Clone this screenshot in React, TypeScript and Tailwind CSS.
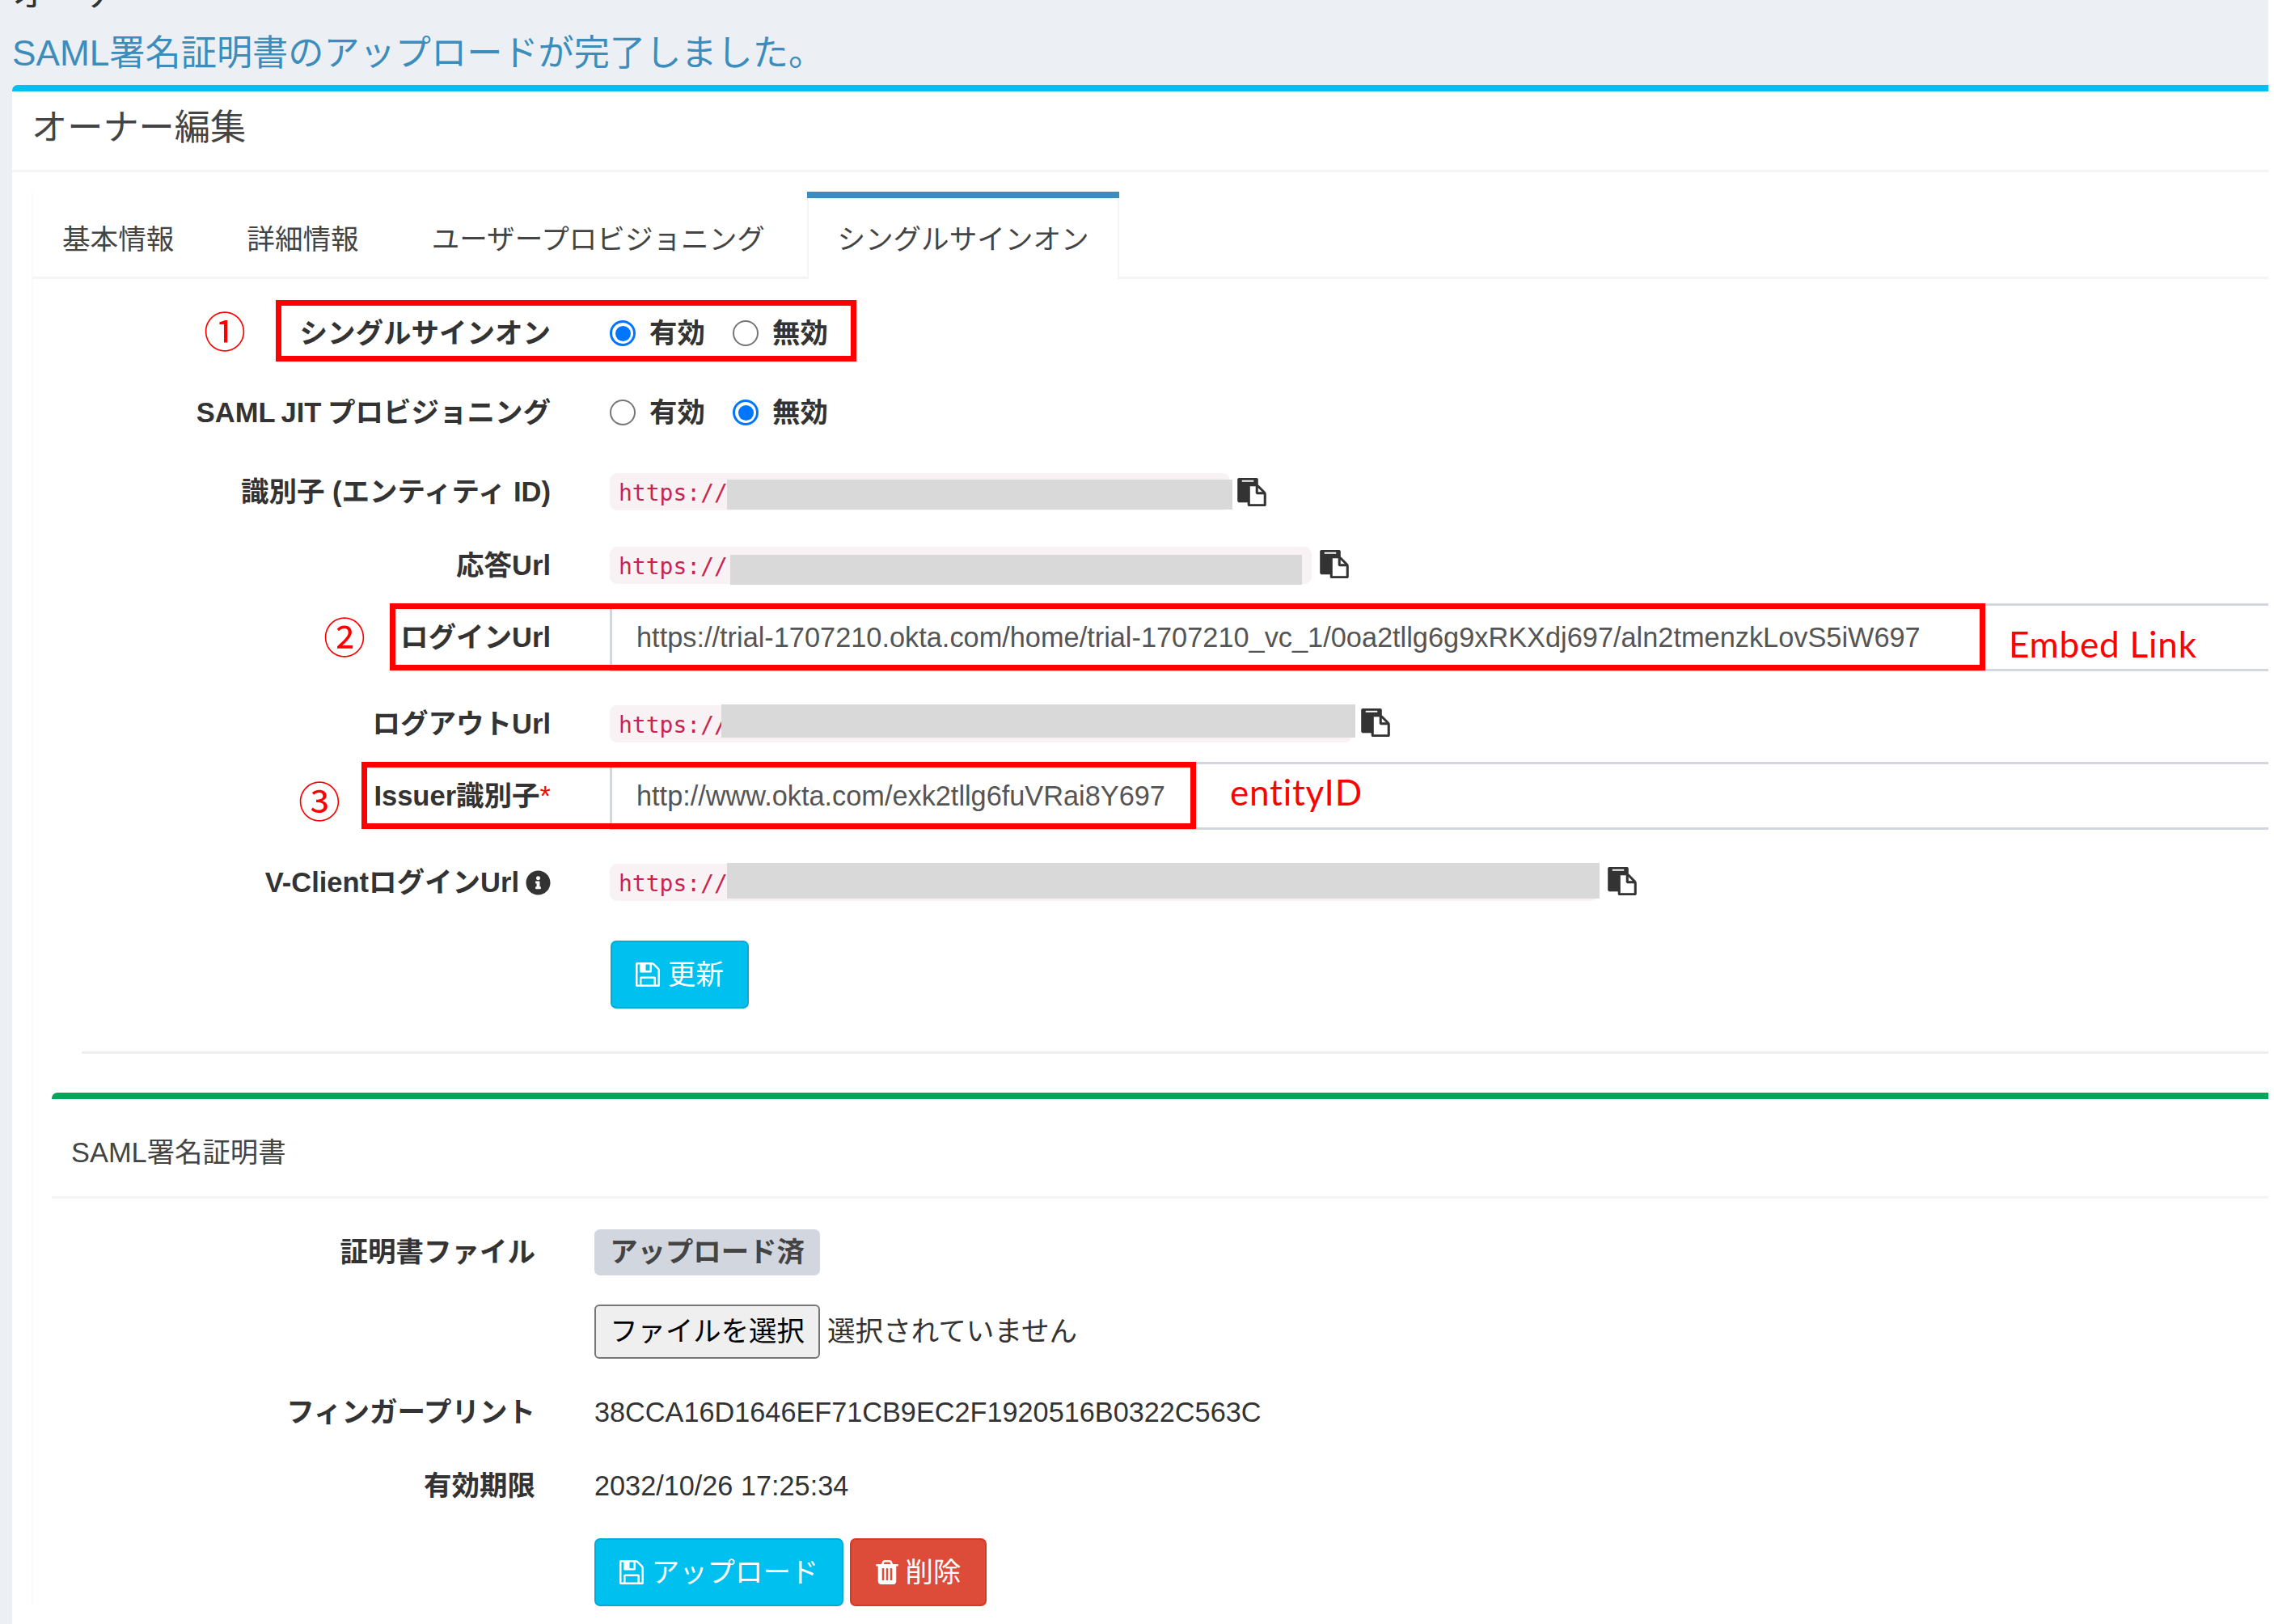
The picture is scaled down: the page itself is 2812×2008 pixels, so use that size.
import { FaInfoCircle } from "react-icons/fa";

const tabs = ["基本情報", "詳細情報", "ユーザープロビジョニング"];

function Label({ children, className = "" }: { children: React.ReactNode; className?: string }) {
  return (
    <div
      className={`flex shrink-0 items-center justify-end whitespace-pre font-bold text-[34.5px] text-[#333] ${className}`}
    >
      {children}
    </div>
  );
}

function Radio({ checked }: { checked?: boolean }) {
  return (
    <span
      className={
        checked
          ? "flex size-8 items-center justify-center rounded-full border-[3px] border-[#0075ff] bg-white"
          : "flex size-8 items-center justify-center rounded-full border-[2.5px] border-[#767676] bg-white"
      }
    >
      {checked && <span className="size-[19px] rounded-full bg-[#0075ff]"></span>}
    </span>
  );
}

function RadioRow({ label, enabled }: { label: string; enabled: boolean }) {
  return (
    <div className="flex h-[98px] items-center">
      <Label className="w-[642px] [word-spacing:-2px]">{label}</Label>
      <div className="ml-[73px] flex items-center font-bold text-[#333]">
        <Radio checked={enabled} />
        <span className="ml-[17px] w-[103px]">有効</span>
        <Radio checked={!enabled} />
        <span className="ml-[17px]">無効</span>
      </div>
    </div>
  );
}

function ClipIcon({ className = "" }: { className?: string }) {
  return (
    <svg viewBox="0 0 1792 1792" className={`h-[35px] w-[36px] shrink-0 fill-[#333] stroke-[#333] stroke-[30px] ${className}`}>
      <path d="M768 1664h896v-640h-416q-40 0-68-28t-28-68v-416h-384v1152zm256-1440v-64q0-13-9.500-22.500t-22.500-9.500h-704q-13 0-22.500 9.500t-9.500 22.500v64q0 13 9.500 22.500t22.500 9.500h704q13 0 22.500-9.500t9.500-22.500zm256 672h299l-299-299v299zm512 128v672q0 40-28 68t-68 28h-960q-40 0-68-28t-28-68v-160h-544q-40 0-68-28t-28-68v-1344q0-40 28-68t68-28h1088q40 0 68 28t28 68v328q21 13 36 28l408 408q28 28 48 76t20 88z" />
    </svg>
  );
}

function SaveIcon() {
  return (
    <svg viewBox="128 128 1536 1536" className="size-[30px] fill-white">
      <path d="M512 1536h768v-384h-768v384zm896 0h128v-896q0-14-10-38.500t-20-34.500l-281-281q-10-10-34-20t-39-10v416q0 40-28 68t-68 28h-576q-40 0-68-28t-28-68v-416h-128v1280h128v-416q0-40 28-68t68-28h832q40 0 68 28t28 68v416zm-384-928v-320q0-13-9.500-22.500t-22.500-9.500h-192q-13 0-22.500 9.500t-9.500 22.500v320q0 13 9.500 22.500t22.500 9.500h192q13 0 22.500-9.500t9.500-22.500zm640 32v928q0 40-28 68t-68 28h-1344q-40 0-68-28t-28-68v-1344q0-40 28-68t68-28h928q40 0 88 20t76 48l280 280q28 28 48 76t20 88z" />
    </svg>
  );
}

function TrashIcon() {
  return (
    <svg viewBox="192 128 1408 1536" className="h-[30px] w-[28px] fill-white">
      <path d="M704 1376v-704q0-14-9-23t-23-9h-64q-14 0-23 9t-9 23v704q0 14 9 23t23 9h64q14 0 23-9t9-23zm256 0v-704q0-14-9-23t-23-9h-64q-14 0-23 9t-9 23v704q0 14 9 23t23 9h64q14 0 23-9t9-23zm256 0v-704q0-14-9-23t-23-9h-64q-14 0-23 9t-9 23v704q0 14 9 23t23 9h64q14 0 23-9t9-23zm-544-992h448l-48-117q-7-9-17-11h-317q-10 2-17 11zm928 32v64q0 14-9 23t-23 9h-96v948q0 83-47 143.500t-113 60.500h-832q-66 0-113-58.500t-47-141.500v-952h-96q-14 0-23-9t-9-23v-64q0-14 9-23t23-9h309l70-167q15-37 54-63t79-26h320q40 0 79 26t54 63l70 167h309q14 0 23 9t9 23z" />
    </svg>
  );
}

export default function App() {
  return (
    <div className="h-[2008px] w-[2812px] overflow-hidden border-r-[7px] border-white bg-[#ecf0f5] pl-[15px] font-['Liberation_Sans','Noto_Sans_CJK_JP',sans-serif] text-[34.4px] leading-none text-[#333]">
      <div className="flex h-[105px] flex-col text-[44.2px]">
        <div className="-mt-[29px] h-[44px]">オーナー</div>
        <div className="mt-[29px] h-[44px] whitespace-nowrap text-[#3c8dbc]">
          SAML署名証明書のアップロードが完了しました。
        </div>
      </div>

      <div className="h-[1903px] rounded-tl-[7px] border-t-8 border-[#00c0ef] bg-white">
        <div className="flex h-[100px] items-center border-b-[3px] border-[#f4f4f4] pl-[24px] text-[44.2px] text-[#444]">
          <span className="mb-[6px]">オーナー編集</span>
        </div>

        <div className="ml-6 mt-[24px] border-l-2 border-[#fafafa]">
          <div className="flex h-[108px] text-[34.6px] text-[#444]">
            <div className="flex w-[957px] items-center gap-[90px] border-b-[3px] border-[#f4f4f4] pl-[36px] pt-[13px] whitespace-nowrap">
              {tabs.map((tab) => (
                <span key={tab}>{tab}</span>
              ))}
            </div>
            <div className="flex w-[386px] flex-col">
              <div className="h-2 bg-[#3c8dbc]"></div>
              <div className="flex flex-1 items-center justify-center border-x-2 border-[#f4f4f4] pt-[3px] whitespace-nowrap">
                シングルサインオン
              </div>
            </div>
            <div className="flex-1 border-b-[3px] border-[#f4f4f4]"></div>
          </div>

          {/* single sign-on form */}
          <div className="relative -ml-[2px] h-[958px] pt-[18px]">
            <RadioRow label="シングルサインオン" enabled={true} />
            <RadioRow label="SAML JIT プロビジョニング" enabled={false} />

            <div className="flex h-[98px] items-center">
              <Label className="w-[642px]">識別子 (エンティティ ID)</Label>
              <div className="relative ml-[73px] h-[46px] w-[767px] rounded-[9px] bg-[#f9f2f4] pl-[11px] pt-[11px] font-['DejaVu_Sans_Mono'] text-[28px] text-[#c7254e]">
                https://
                <div className="absolute left-[145px] top-[8px] h-[37px] w-[625px] bg-[#d9d9d9]"></div>
              </div>
              <ClipIcon className="ml-[9px]" />
            </div>

            <div className="flex h-[84px] items-center">
              <Label className="w-[642px]">応答Url</Label>
              <div className="relative ml-[73px] h-[46px] w-[868px] rounded-[9px] bg-[#f9f2f4] pl-[11px] pt-[11px] font-['DejaVu_Sans_Mono'] text-[28px] text-[#c7254e]">
                https://
                <div className="absolute left-[149px] top-[10px] h-[37px] w-[707px] bg-[#d9d9d9]"></div>
              </div>
              <ClipIcon className="mb-[3px] ml-[10px]" />
            </div>

            <div className="mt-[5px] flex h-[84px] items-center">
              <Label className="w-[642px]">ログインUrl</Label>
              <div className="ml-[73px] flex h-[84px] flex-1 items-center border-y-[3px] border-l-[3px] border-[#d2d6de] pl-[30px] text-[34.33px] text-[#555]">
                https://trial-1707210.okta.com/home/trial-1707210_vc_1/0oa2tllg6g9xRKXdj697/aln2tmenzkLovS5iW697
              </div>
            </div>

            <div className="mt-[23px] flex h-[84px] items-center">
              <Label className="w-[642px]">ログアウトUrl</Label>
              <div className="relative ml-[73px] h-[46px] w-[918px] rounded-[9px] bg-[#f9f2f4] pl-[11px] pt-[11px] font-['DejaVu_Sans_Mono'] text-[28px] text-[#c7254e]">
                https://
                <div className="absolute left-[138px] -top-px h-[41px] w-[784px] bg-[#d9d9d9]"></div>
              </div>
              <ClipIcon className="mb-[3px] ml-[11px]" />
            </div>

            <div className="mt-[5px] flex h-[84px] items-center">
              <Label className="w-[642px]">
                Issuer識別子<span className="font-normal text-[#f00]">*</span>
              </Label>
              <div className="ml-[73px] flex h-[84px] flex-1 items-center border-y-[3px] border-l-[3px] border-[#d2d6de] pl-[30px] text-[34.3px] text-[#555]">
                http://www.okta.com/exk2tllg6fuVRai8Y697
              </div>
            </div>

            <div className="mt-[23px] flex h-[84px] items-center">
              <Label className="w-[642px]">
                V-ClientログインUrl
                <FaInfoCircle className="ml-[8px] size-[31px]" />
              </Label>
              <div className="relative ml-[73px] h-[46px] w-[1222px] rounded-[9px] bg-[#f9f2f4] pl-[11px] pt-[11px] font-['DejaVu_Sans_Mono'] text-[28px] text-[#c7254e]">
                https://
                <div className="absolute left-[145px] -top-px h-[44px] w-[1079px] bg-[#d9d9d9]"></div>
              </div>
              <ClipIcon className="mb-[3px] ml-[12px]" />
            </div>

            <button className="ml-[716px] mt-[30px] flex h-[84px] w-[171px] items-center justify-center gap-[10px] rounded-[7px] border-[2.5px] border-[#00acd6] bg-[#00c0ef] text-white">
              <SaveIcon />
              更新
            </button>

            {/* callouts */}
            <div className="absolute left-[302px] top-[26px] h-[76px] w-[718px] border-[7px] border-[#f00]"></div>
            <div className="absolute left-[443px] top-[401px] h-[83px] w-[1973px] border-[7px] border-[#f00]"></div>
            <div className="absolute left-[408px] top-[597px] h-[83px] w-[1032px] border-[7px] border-[#f00]"></div>
            <span className="absolute left-[213px] top-[41px] text-[52px] text-[#f00]">①</span>
            <span className="absolute left-[361px] top-[419px] text-[52px] text-[#f00]">②</span>
            <span className="absolute left-[330px] top-[622px] text-[52px] text-[#f00]">③</span>
            <span className="absolute left-[2445px] top-[429px] whitespace-nowrap font-['Lato'] text-[44px] tracking-[0.8px] text-[#f00]">
              Embed Link
            </span>
            <span className="absolute left-[1482px] top-[612px] font-['Lato'] text-[44px] tracking-[0.8px] text-[#f00]">
              entityID
            </span>
          </div>

          <div className="ml-[60px] -mt-[3px] h-[3px] bg-[#eee]"></div>

          {/* certificate box */}
          <div className="ml-[23px] mt-[48px] rounded-tl-[7px] border-t-8 border-[#00a65a]">
            <div className="flex h-[123px] items-center border-b-[3px] border-[#f4f4f4] pl-[24px] pt-[13px] text-[#444]">
              SAML署名証明書
            </div>
            <div className="flex h-[57px] mt-[38px]">
              <Label className="w-[598px]">証明書ファイル</Label>
              <div className="ml-[73px] flex w-[279px] items-center justify-center rounded-[7px] bg-[#d2d6de] font-bold text-[#444]">
                アップロード済
              </div>
            </div>
            <div className="ml-[671px] mt-[36px] flex h-[67px] items-center">
              <div className="flex h-[67px] w-[279px] items-center justify-center rounded-[6px] border-[2.5px] border-[#767676] bg-[#efefef] text-black">
                ファイルを選択
              </div>
              <span className="ml-[9px] text-[34.6px]">選択されていません</span>
            </div>
            <div className="mt-[21px] flex h-[91px] items-center">
              <Label className="w-[598px]">フィンガープリント</Label>
              <span className="ml-[73px] text-[34.25px]">38CCA16D1646EF71CB9EC2F1920516B0322C563C</span>
            </div>
            <div className="flex h-[91px] items-center">
              <Label className="w-[598px]">有効期限</Label>
              <span className="ml-[73px] text-[34.25px]">2032/10/26 17:25:34</span>
            </div>
            <div className="ml-[671px] mt-[19px] flex gap-[8px] text-white">
              <button className="flex h-[84px] w-[308px] items-center justify-center gap-[10px] rounded-[7px] border-[2.5px] border-[#00acd6] bg-[#00c0ef]">
                <SaveIcon />
                アップロード
              </button>
              <button className="flex h-[84px] w-[169px] items-center justify-center gap-[9px] rounded-[7px] border-[2.5px] border-[#d73925] bg-[#dd4b39]">
                <TrashIcon />
                削除
              </button>
            </div>
          </div>
        </div>
      </div>
    </div>
  );
}
